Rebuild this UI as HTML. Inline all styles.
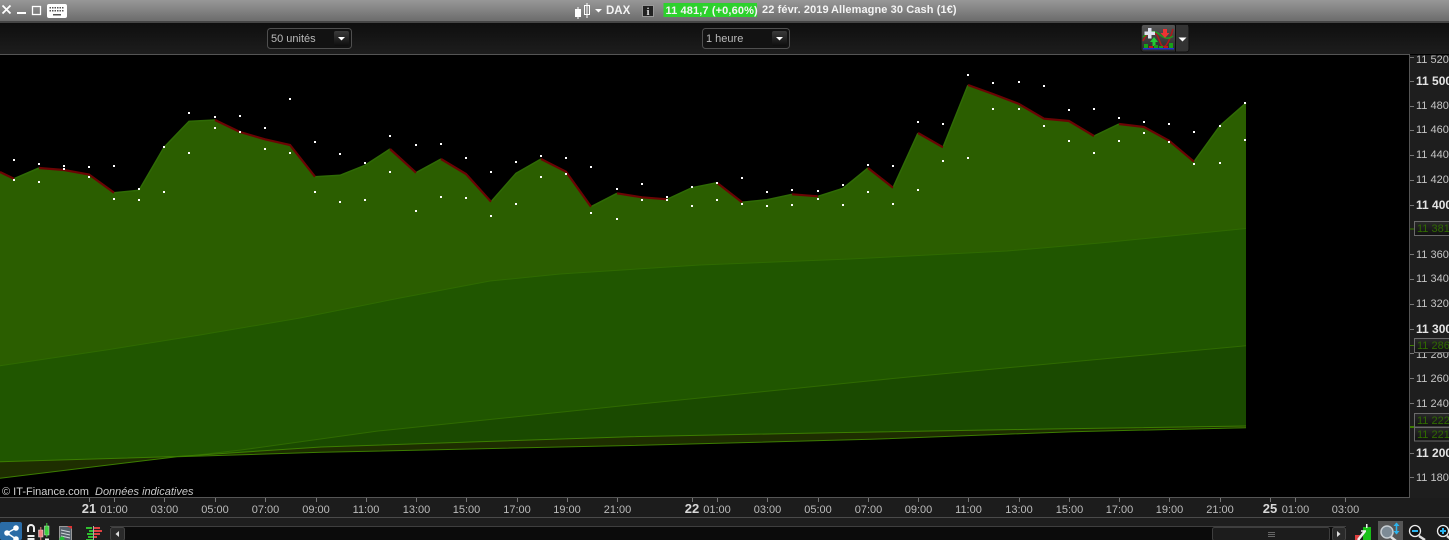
<!DOCTYPE html>
<html>
<head>
<meta charset="utf-8">
<style>
html,body{margin:0;padding:0;background:#000;width:1449px;height:540px;overflow:hidden}
svg{display:block}
text{font-family:"Liberation Sans",sans-serif;font-size:11px}
.y{fill:#c4c4c4}
.yb{fill:#e4e4e4;font-weight:bold;font-size:12px}
.x{fill:#bcbcbc;text-anchor:middle}
.xb{fill:#d8d8d8;font-weight:bold;font-size:13px;text-anchor:middle}
.t{fill:#f4f4f4;font-weight:bold}
.tag{fill:#2f6a00}
</style>
</head>
<body>
<svg width="1449" height="540" viewBox="0 0 1449 540" xmlns="http://www.w3.org/2000/svg">
<defs>
<linearGradient id="tb" x1="0" y1="0" x2="0" y2="1"><stop offset="0" stop-color="#979797"/><stop offset="1" stop-color="#6c6c6c"/></linearGradient>
<linearGradient id="bar" x1="0" y1="0" x2="0" y2="1"><stop offset="0" stop-color="#0e0e0e"/><stop offset="1" stop-color="#1d1d1d"/></linearGradient>
<linearGradient id="btn" x1="0" y1="0" x2="0" y2="1"><stop offset="0" stop-color="#3a3a3a"/><stop offset="1" stop-color="#0d0d0d"/></linearGradient>
<linearGradient id="tagb" x1="0" y1="0" x2="0" y2="1"><stop offset="0" stop-color="#2a2a2a"/><stop offset="1" stop-color="#101010"/></linearGradient>
<linearGradient id="ind" x1="0" y1="0" x2="0" y2="1"><stop offset="0" stop-color="#555"/><stop offset="1" stop-color="#2a2a2a"/></linearGradient>
<clipPath id="axis"><rect x="1410" y="55" width="39" height="462"/></clipPath>
</defs>

<!-- title bar -->
<rect x="0" y="0" width="1449" height="21" fill="url(#tb)"/>
<rect x="0" y="21" width="1449" height="2" fill="#454545"/>
<path d="M2.5 5.5L10.5 13.5M10.5 5.5L2.5 13.5" stroke="#fff" stroke-width="1.8" fill="none"/>
<rect x="17" y="12" width="9" height="2" fill="#fff"/>
<rect x="32.5" y="6.5" width="8" height="8" fill="none" stroke="#fff" stroke-width="1.3"/>
<rect x="47" y="4" width="20" height="14" rx="2" fill="#fff"/>
<g fill="#555">
<rect x="49.5" y="7" width="1.5" height="1.5"/><rect x="52" y="7" width="1.5" height="1.5"/><rect x="54.5" y="7" width="1.5" height="1.5"/><rect x="57" y="7" width="1.5" height="1.5"/><rect x="59.5" y="7" width="1.5" height="1.5"/><rect x="62" y="7" width="1.5" height="1.5"/>
<rect x="49.5" y="10" width="1.5" height="1.5"/><rect x="52" y="10" width="1.5" height="1.5"/><rect x="54.5" y="10" width="1.5" height="1.5"/><rect x="57" y="10" width="1.5" height="1.5"/><rect x="59.5" y="10" width="1.5" height="1.5"/><rect x="62" y="10" width="1.5" height="1.5"/>
<rect x="53" y="14" width="8" height="1.5"/>
</g>
<!-- candle icon -->
<rect x="575" y="9" width="6" height="8" fill="#fff"/><rect x="577.5" y="7" width="1" height="12" fill="#fff"/>
<rect x="584.5" y="5.5" width="5" height="9" fill="none" stroke="#fff"/><rect x="586.5" y="3" width="1" height="15" fill="#fff"/>
<path d="M595 9h7l-3.500 3.500z" fill="#fff"/>
<text x="606" y="14" class="t" style="font-size:11.500px">DAX</text>
<rect x="642.500" y="5.500" width="11" height="11" fill="#222" stroke="#999"/>
<text x="648" y="15" text-anchor="middle" style="font-family:'Liberation Serif',serif;font-weight:bold;font-size:11px" fill="#ddd">i</text>
<rect x="663.500" y="3" width="93.500" height="14" fill="#2dd12d"/>
<text x="665.500" y="14" class="t" style="letter-spacing:.12px">11 481,7 (+0,60%)</text>
<text x="762" y="13" class="t" style="letter-spacing:.1px">22 févr. 2019</text>
<text x="831" y="13" class="t" style="letter-spacing:.1px">Allemagne 30 Cash (1€)</text>

<!-- top toolbar -->
<rect x="0" y="23" width="1449" height="31" fill="url(#bar)"/>
<rect x="0" y="54" width="1410" height="1" fill="#555"/>
<rect x="267.500" y="28.500" width="84" height="20" rx="3" fill="#121212" stroke="#4f4f4f"/>
<text x="271" y="42" fill="#bbb">50 unités</text>
<rect x="334" y="31" width="15" height="15" rx="2" fill="url(#btn)"/>
<path d="M338 37h7l-3.500 3.500z" fill="#fff"/>
<rect x="702.500" y="28.500" width="87" height="20" rx="3" fill="#121212" stroke="#4f4f4f"/>
<text x="706" y="42" fill="#bbb">1 heure</text>
<rect x="772" y="31" width="15" height="15" rx="2" fill="url(#btn)"/>
<path d="M776 37h7l-3.500 3.500z" fill="#fff"/>
<!-- indicator button -->
<rect x="1141" y="24.500" width="48" height="27.500" rx="3" fill="#2e2e2e" stroke="#111"/>
<rect x="1142" y="25" width="33" height="26.500" rx="2" fill="url(#ind)"/>
<rect x="1175" y="25" width="1" height="27" fill="#0c0c0c"/>
<path d="M1176 25h12v26h-12z" fill="#333"/>
<path d="M1178.500 37.500h8l-4 4z" fill="#fff"/>
<path d="M1143 41C1150 27 1156 30 1160 42S1170 40 1173 29" fill="none" stroke="#b01818" stroke-width="1.500"/>
<path d="M1143 37C1150 31 1154 30 1159 34S1168 40 1173 36" fill="none" stroke="#1e9a1e" stroke-width="1.500"/>
<path d="M1146 28h3.500v3.500h3.500v3.500h-3.500v3.500h-3.500v-3.500h-3.500v-3.500h3.500z" fill="#dfe3f0" transform="translate(2,0)"/>
<path d="M1163 29h4v4h2.500l-4.500 5-4.500-5h2.500z" fill="#ee3333"/>
<path d="M1154 37l4 5h-2.500v4h-3v-4H1150z" fill="#22cc33"/>
<g>
<rect x="1144" y="44" width="4" height="4" fill="#18a018"/><rect x="1149" y="46" width="4" height="2" fill="#c01818"/><rect x="1154" y="45" width="4" height="3" fill="#18a018"/><rect x="1159" y="46" width="4" height="2" fill="#18a018"/><rect x="1164" y="46" width="4" height="2" fill="#c01818"/><rect x="1169" y="43" width="4" height="5" fill="#18a018"/>
<rect x="1143" y="48" width="31" height="1.500" fill="#2233cc"/>
</g>

<!-- chart area -->
<rect x="0" y="55" width="1409" height="442" fill="#000"/>
<polygon fill="#2b5e00" points="0,172 14,178.700 39,168 64,170 89,174.500 114,192.700 139,190.300 164,147.300 189,121.300 215,120 240,132 265,139.300 290,145 315,176.700 340,175.300 365,165.300 390,149 416,172.700 441,159 466,174 491,201.700 516,173.300 541,159 566,171.700 591,206.700 617,193.300 642,197.300 667,199.300 692,187.700 717,182.700 742,202.300 767,199.700 792,194.300 818,196.300 843,188.300 868,168 893,187.700 918,133 943,147.300 968,85 993,94 1019,104 1044,118.700 1069,121 1094,136 1119,124 1144,127 1169,140.700 1194,161.700 1220,125.700 1246,103 1246,428 1072,431.700 871,439.300 630,445.500 321,452.300 177,456.700 0,478.300"/>
<polygon fill="#205600" points="0,365.700 106,350 200,335 300,318 400,298 490,281 560,274 700,265 850,259 1007,251 1100,243 1246,228.500 1246,428 1072,431.700 871,439.300 630,445.500 321,452.300 177,456.700 0,461.700"/>
<polyline fill="none" stroke="#2f6a00" stroke-width="1" points="0,365.700 106,350 200,335 300,318 400,298 490,281 560,274 700,265 850,259 1007,251 1100,243 1246,228.500"/>
<polygon fill="#1a4a00" points="189,456 241,450 378,431 630,405 911,376.700 1246,345.700 1246,426 1032,429.300 831,432.700 630,436.700 321,447 225,452"/>
<polyline fill="none" stroke="#2f6a00" stroke-width="1" points="189,456 241,450 378,431 630,405 911,376.700 1246,345.700"/>
<polygon fill="#1e2e00" points="0,461.700 177,456.500 321,447 630,436.700 831,432.700 1032,429.300 1246,426 1246,427.700 1072,431.700 871,439.300 630,445.500 321,452.300 177,456.700 0,478.300"/>
<polyline fill="none" stroke="#3c7d00" stroke-width="1" points="0,461.700 177,456.500 321,447 630,436.700 831,432.700 1032,429.300 1246,426"/>
<polyline fill="none" stroke="#3c7d00" stroke-width="1" points="0,478.300 177,456.700 321,452.300 630,445.500 871,439.300 1072,431.700 1246,427.700"/>

<!-- up segments -->
<g fill="none" stroke="#2f6a05" stroke-width="1.500">
<polyline points="14,178.700 39,168"/><polyline points="114,192.700 139,190.300 164,147.300 189,121.300 215,120"/><polyline points="315,176.700 340,175.300 365,165.300 390,149"/><polyline points="416,172.700 441,159"/><polyline points="491,201.700 516,173.300 541,159"/><polyline points="591,206.700 617,193.300"/><polyline points="667,199.300 692,187.700 717,182.700"/><polyline points="742,202.300 767,199.700 792,194.300"/><polyline points="818,196.300 843,188.300 868,168"/><polyline points="893,187.700 918,133"/><polyline points="943,147.300 968,85"/><polyline points="1094,136 1119,124"/><polyline points="1194,161.700 1220,125.700 1246,103"/>
</g>
<!-- down segments -->
<g fill="none" stroke="#6b0404" stroke-width="2.200">
<polyline points="0,172 14,178.700"/><polyline points="39,168 64,170 89,174.500 114,192.700"/><polyline points="215,120 240,132 265,139.300 290,145 315,176.700"/><polyline points="390,149 416,172.700"/><polyline points="441,159 466,174 491,201.700"/><polyline points="541,159 566,171.700 591,206.700"/><polyline points="617,193.300 642,197.300 667,199.300"/><polyline points="717,182.700 742,202.300"/><polyline points="792,194.300 818,196.300"/><polyline points="868,168 893,187.700"/><polyline points="918,133 943,147.300"/><polyline points="968,85 993,94 1019,104 1044,118.700 1069,121 1094,136"/><polyline points="1119,124 1144,127 1169,140.700 1194,161.700"/>
</g>

<!-- dots -->
<path fill="#fff" shape-rendering="crispEdges" d="M13 159h2v2h-2zM13 179h2v2h-2zM38 163h2v2h-2zM38 181h2v2h-2zM63 165h2v2h-2zM63 168h2v2h-2zM88 166h2v2h-2zM88 176h2v2h-2zM113 165h2v2h-2zM113 198h2v2h-2zM138 188h2v2h-2zM138 199h2v2h-2zM163 146h2v2h-2zM163 191h2v2h-2zM188 112h2v2h-2zM188 152h2v2h-2zM214 116h2v2h-2zM214 127h2v2h-2zM239 115h2v2h-2zM239 131h2v2h-2zM264 127h2v2h-2zM264 148h2v2h-2zM289 98h2v2h-2zM289 152h2v2h-2zM314 141h2v2h-2zM314 191h2v2h-2zM339 153h2v2h-2zM339 201h2v2h-2zM364 162h2v2h-2zM364 199h2v2h-2zM389 135h2v2h-2zM389 171h2v2h-2zM415 144h2v2h-2zM415 210h2v2h-2zM440 143h2v2h-2zM440 196h2v2h-2zM465 157h2v2h-2zM465 197h2v2h-2zM490 171h2v2h-2zM490 215h2v2h-2zM515 161h2v2h-2zM515 203h2v2h-2zM540 155h2v2h-2zM540 176h2v2h-2zM565 157h2v2h-2zM565 173h2v2h-2zM590 166h2v2h-2zM590 212h2v2h-2zM616 188h2v2h-2zM616 218h2v2h-2zM641 183h2v2h-2zM641 199h2v2h-2zM666 196h2v2h-2zM666 199h2v2h-2zM691 186h2v2h-2zM691 205h2v2h-2zM716 182h2v2h-2zM716 199h2v2h-2zM741 177h2v2h-2zM741 203h2v2h-2zM766 191h2v2h-2zM766 205h2v2h-2zM791 189h2v2h-2zM791 204h2v2h-2zM817 190h2v2h-2zM817 198h2v2h-2zM842 184h2v2h-2zM842 204h2v2h-2zM867 164h2v2h-2zM867 191h2v2h-2zM892 165h2v2h-2zM892 203h2v2h-2zM917 121h2v2h-2zM917 189h2v2h-2zM942 123h2v2h-2zM942 160h2v2h-2zM967 74h2v2h-2zM967 157h2v2h-2zM992 82h2v2h-2zM992 108h2v2h-2zM1018 81h2v2h-2zM1018 108h2v2h-2zM1043 85h2v2h-2zM1043 125h2v2h-2zM1068 109h2v2h-2zM1068 140h2v2h-2zM1093 108h2v2h-2zM1093 152h2v2h-2zM1118 117h2v2h-2zM1118 140h2v2h-2zM1143 121h2v2h-2zM1143 132h2v2h-2zM1168 123h2v2h-2zM1168 141h2v2h-2zM1193 131h2v2h-2zM1193 163h2v2h-2zM1219 125h2v2h-2zM1219 162h2v2h-2zM1244 102h2v2h-2zM1244 139h2v2h-2z"/>

<text x="2" y="495" fill="#d0d0d0">© IT-Finance.com</text>
<text x="95" y="495" fill="#c8c8c8" font-style="italic">Données indicatives</text>

<!-- right axis -->
<rect x="1409" y="55" width="40" height="463" fill="#1e1e1e"/>
<rect x="1409" y="54" width="1" height="444" fill="#555"/>
<g stroke="#777" stroke-width="1" shape-rendering="crispEdges">
<path d="M1410 57.500h4M1410 81.500h4M1410 106.500h4M1410 130.500h4M1410 155.500h4M1410 180.500h4M1410 205.500h4M1410 254.500h4M1410 279.500h4M1410 304.500h4M1410 329.500h4M1410 353.500h4M1410 378.500h4M1410 403.500h4M1410 453.500h4M1410 477.500h4"/>
</g>
<g clip-path="url(#axis)">
<text x="1416" y="63" class="y">11 520</text>
<text x="1416" y="85" class="yb">11 500</text>
<text x="1416" y="109" class="y">11 480</text>
<text x="1416" y="133" class="y">11 460</text>
<text x="1416" y="158" class="y">11 440</text>
<text x="1416" y="183" class="y">11 420</text>
<text x="1416" y="209" class="yb">11 400</text>
<text x="1416" y="258" class="y">11 360</text>
<text x="1416" y="282" class="y">11 340</text>
<text x="1416" y="307" class="y">11 320</text>
<text x="1416" y="333" class="yb">11 300</text>
<text x="1416" y="358" class="y">11 280</text>
<text x="1416" y="382" class="y">11 260</text>
<text x="1416" y="407" class="y">11 240</text>
<text x="1416" y="457" class="yb">11 200</text>
<text x="1416" y="481" class="y">11 180</text>

<rect x="1414.500" y="221.500" width="40" height="14" fill="url(#tagb)" stroke="#6a6a6a"/>
<text x="1417" y="232" class="tag">11 381</text>
<rect x="1414.500" y="338.500" width="40" height="14" fill="url(#tagb)" stroke="#6a6a6a"/>
<text x="1417" y="349" class="tag">11 286</text>
<rect x="1414.500" y="413.500" width="40" height="13.500" fill="url(#tagb)" stroke="#6a6a6a"/>
<text x="1417" y="424" class="tag">11 222</text>
<rect x="1414.500" y="427.500" width="40" height="13.500" fill="url(#tagb)" stroke="#6a6a6a"/>
<text x="1417" y="438" class="tag">11 221</text>
</g>
<path d="M1410 229h4M1410 345.500h4" stroke="#3c7d00"/>
<path d="M1410 427h4" stroke="#3c7d00" stroke-width="2"/>

<!-- x axis -->
<rect x="0" y="497" width="1410" height="1" fill="#555"/>
<rect x="0" y="498" width="1449" height="19" fill="#1c1c1c"/>
<rect x="1409" y="497" width="1" height="1" fill="#555"/>
<rect x="0" y="517" width="1449" height="1" fill="#4a4a4a"/>
<path stroke="#777" shape-rendering="crispEdges" d="M89.500 498v4M114.500 498v4M164.500 498v4M215.500 498v4M265.500 498v4M316.500 498v4M366.500 498v4M416.500 498v4M466.500 498v4M517.500 498v4M567.500 498v4M617.500 498v4M692.500 498v4M717.500 498v4M767.500 498v4M818.500 498v4M868.500 498v4M918.500 498v4M968.500 498v4M1019.500 498v4M1069.500 498v4M1119.500 498v4M1169.500 498v4M1220.500 498v4M1270.500 498v4M1295.500 498v4M1345.500 498v4"/>
<text x="89" y="513" class="xb">21</text>
<text x="114" y="513" class="x">01:00</text><text x="164.500" y="513" class="x">03:00</text><text x="215" y="513" class="x">05:00</text><text x="265.500" y="513" class="x">07:00</text><text x="316" y="513" class="x">09:00</text><text x="366" y="513" class="x">11:00</text><text x="416.500" y="513" class="x">13:00</text><text x="466.500" y="513" class="x">15:00</text><text x="517" y="513" class="x">17:00</text><text x="567" y="513" class="x">19:00</text><text x="617.500" y="513" class="x">21:00</text>
<text x="692" y="513" class="xb">22</text>
<text x="717" y="513" class="x">01:00</text><text x="767.500" y="513" class="x">03:00</text><text x="818" y="513" class="x">05:00</text><text x="868.500" y="513" class="x">07:00</text><text x="918.500" y="513" class="x">09:00</text><text x="968.500" y="513" class="x">11:00</text><text x="1019" y="513" class="x">13:00</text><text x="1069.500" y="513" class="x">15:00</text><text x="1119.500" y="513" class="x">17:00</text><text x="1169.500" y="513" class="x">19:00</text><text x="1220" y="513" class="x">21:00</text>
<text x="1270" y="513" class="xb">25</text>
<text x="1295.500" y="513" class="x">01:00</text><text x="1345.500" y="513" class="x">03:00</text>

<!-- bottom toolbar -->
<rect x="0" y="518" width="1449" height="22" fill="#1e1e1e"/>
<rect x="0" y="522" width="22" height="18" rx="2" fill="#2b6ca6"/>
<path d="M16 528L7 533L16 539" stroke="#fff" stroke-width="1.500" fill="none"/>
<circle cx="16" cy="528" r="2.800" fill="#fff"/><circle cx="7" cy="533" r="2.800" fill="#fff"/><circle cx="16" cy="539" r="2.800" fill="#fff"/>
<!-- magnet and candles -->
<path d="M28 532v-4a3 3 0 0 1 6 0v4" fill="none" stroke="#eee" stroke-width="2"/>
<rect x="27.500" y="535" width="7" height="2" fill="#eee"/><rect x="27.500" y="538" width="7" height="2" fill="#eee"/>
<rect x="38.500" y="530" width="4.500" height="7" fill="#f08080" stroke="#eee" stroke-width=".5"/><rect x="40.300" y="527" width="1" height="13" fill="#f08080"/>
<rect x="44.500" y="526" width="4.500" height="9" fill="#40d040" stroke="#eee" stroke-width=".5"/><rect x="46.300" y="523" width="1" height="14" fill="#40d040"/>
<rect x="45" y="538.500" width="4" height="1.500" fill="#eee"/>
<!-- doc -->
<rect x="59.500" y="526.500" width="12" height="14" fill="#55606a" stroke="#999"/>
<path d="M61 530l9 2M61 533l9 2M61 536l9 2" stroke="#cfd6dc" stroke-width="1"/>
<path d="M67 526h5v3z" fill="#e03030"/>
<circle cx="62" cy="539" r="2.500" fill="#22bb33"/>
<!-- bars -->
<g shape-rendering="crispEdges">
<rect x="86" y="527" width="6" height="2" fill="#30c030"/><rect x="93" y="527" width="7" height="2" fill="#e04040"/>
<rect x="89" y="530" width="4" height="2" fill="#30c030"/><rect x="94" y="530" width="8" height="2" fill="#e04040"/>
<rect x="87" y="533" width="6" height="2" fill="#30c030"/><rect x="94" y="533" width="6" height="2" fill="#e04040"/>
<rect x="88" y="536" width="5" height="2" fill="#30c030"/><rect x="94" y="536" width="3" height="2" fill="#e04040"/>
<rect x="86" y="539" width="7" height="1" fill="#30c030"/>
<rect x="93" y="526" width="1" height="14" fill="#aaa"/>
</g>
<!-- scrollbar -->
<rect x="110" y="526" width="1236" height="14" fill="#0b0b0b"/>
<rect x="110" y="526" width="1236" height="1" fill="#3e3e3e"/>
<rect x="110.500" y="527.500" width="14" height="13" rx="2" fill="#2a2a2a" stroke="#444"/>
<path d="M119 531v6l-3.500-3z" fill="#ddd"/>
<rect x="1212.500" y="527.500" width="117" height="13" rx="2" fill="#1c1c1c" stroke="#3e3e3e"/>
<path d="M1268 532.500h7M1268 534.500h7M1268 536.500h7" stroke="#666"/>
<rect x="1332.500" y="527.500" width="13" height="13" rx="2" fill="#2a2a2a" stroke="#444"/>
<path d="M1337 531v6l3.500-3z" fill="#ddd"/>
<!-- tools -->
<rect x="1363" y="527" width="8" height="13" fill="#18c018"/><rect x="1366" y="524" width="1.500" height="4" fill="#eee"/>
<rect x="1355" y="535" width="5" height="5" fill="#e04040"/>
<path d="M1358 540l7-9" stroke="#eee" stroke-width="2.500" fill="none"/>
<path d="M1361 531l5 0" stroke="#eee" stroke-width="1.500"/>
<rect x="1378" y="521" width="25" height="19" fill="#565656"/>
<circle cx="1387" cy="532" r="6" fill="#7d8b96" stroke="#c6cdd2" stroke-width="1.500"/>
<path d="M1391 537l5 4" stroke="#ddd" stroke-width="2.500"/>
<path d="M1396.500 523v11" stroke="#2cb4ee" stroke-width="1.500"/>
<path d="M1393.500 526l3-3.500 3 3.500zM1393.500 531l3 3.500 3-3.500z" fill="#2cb4ee"/>
<circle cx="1415" cy="531" r="5.500" fill="#111" stroke="#eee" stroke-width="1.300"/>
<rect x="1412" y="530" width="6" height="2" fill="#2cb4ee"/>
<path d="M1419 536l6 4" stroke="#ddd" stroke-width="2.500"/>
<circle cx="1443" cy="531" r="5.500" fill="#111" stroke="#eee" stroke-width="1.300"/>
<path d="M1440 531h6M1443 528v6" stroke="#2cb4ee" stroke-width="2"/>
<path d="M1447 536l4 3" stroke="#ddd" stroke-width="2.500"/>
</svg>
</body>
</html>
